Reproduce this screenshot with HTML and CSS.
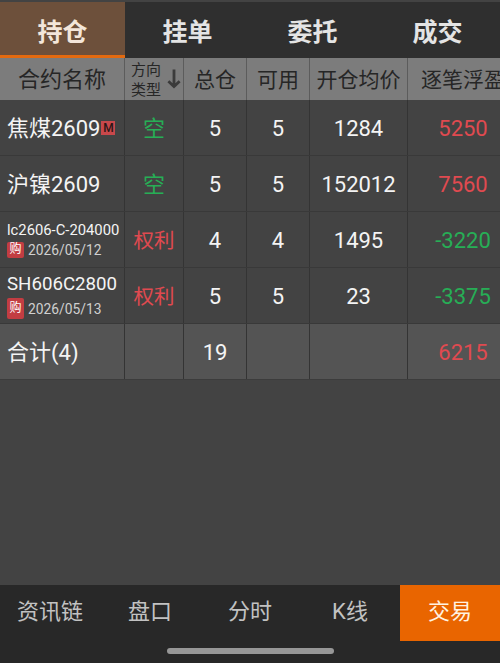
FILE: index.html
```
<!DOCTYPE html>
<html lang="zh-CN">
<head>
    <meta charset="UTF-8">
    <meta name="viewport" content="width=device-width, initial-scale=1.0">
    <title>持仓</title>
    <link rel="stylesheet" href="styles.css">
</head>
<body>
    <div class="app">
        <nav class="tabs">
            <a class="tab active">持仓</a>
            <a class="tab">挂单</a>
            <a class="tab">委托</a>
            <a class="tab">成交</a>
        </nav>

        <main class="positions">
            <div class="row header">
                <div class="cell">合约名称</div>
                <div class="cell sort">
                    <span class="sort-label">方向<br>类型</span>
                    <svg class="arrow" width="14" height="20" viewBox="0 0 14 20">
                        <path d="M7 0.5V17M1.4 12.2L7 17.6L12.6 12.2" />
                    </svg>
                </div>
                <div class="cell">总仓</div>
                <div class="cell">可用</div>
                <div class="cell">开仓均价</div>
                <div class="cell">逐笔浮盈</div>
            </div>

            <div class="row">
                <div class="cell name">焦煤2609<span class="main-badge">M</span></div>
                <div class="cell green">空</div>
                <div class="cell">5</div>
                <div class="cell">5</div>
                <div class="cell">1284</div>
                <div class="cell red">5250</div>
            </div>
            <div class="row">
                <div class="cell name">沪镍2609</div>
                <div class="cell green">空</div>
                <div class="cell">5</div>
                <div class="cell">5</div>
                <div class="cell">152012</div>
                <div class="cell red">7560</div>
            </div>
            <div class="row">
                <div class="cell name option">
                    <div class="code code-small">lc2606-C-204000</div>
                    <div class="expiry"><span class="buy-badge">购</span>2026/05/12</div>
                </div>
                <div class="cell red side">权利</div>
                <div class="cell">4</div>
                <div class="cell">4</div>
                <div class="cell">1495</div>
                <div class="cell green">-3220</div>
            </div>
            <div class="row">
                <div class="cell name option spaced">
                    <div class="code">SH606C2800</div>
                    <div class="expiry"><span class="buy-badge tall">购</span>2026/05/13</div>
                </div>
                <div class="cell red side">权利</div>
                <div class="cell">5</div>
                <div class="cell">5</div>
                <div class="cell">23</div>
                <div class="cell green">-3375</div>
            </div>
            <div class="row total">
                <div class="cell name">合计(4)</div>
                <div class="cell"></div>
                <div class="cell">19</div>
                <div class="cell"></div>
                <div class="cell"></div>
                <div class="cell red">6215</div>
            </div>
        </main>

        <footer class="bottom">
            <nav class="bottom-nav">
                <a class="nav-item">资讯链</a>
                <a class="nav-item">盘口</a>
                <a class="nav-item">分时</a>
                <a class="nav-item">K线</a>
                <a class="nav-item active">交易</a>
            </nav>
            <div class="home-bar"></div>
        </footer>
    </div>
</body>
</html>
```

FILE: styles.css
```
:root {
    --bg: #434343;
    --bar: #2f2f2f;
    --bottom: #282828;
    --line: #343434;
    --orange: #e96500;
    --red: #e04a50;
    --green: #27ae56;
    --text: #f4f4f4;
}

* {
    box-sizing: border-box;
}

body {
    margin: 0;
    background: var(--bg);
    color: var(--text);
    font-family: Roboto, "Noto Sans CJK SC", sans-serif;
    font-size: 22px;
    overflow: hidden;
}

.app {
    display: flex;
    flex-direction: column;
    width: 500px;
    height: 663px;
    padding-top: 2px;
    overflow: hidden;
}

/* top tabs */
.tabs {
    display: flex;
    height: 56px;
    background: var(--bar);
}

.tab {
    flex: 1;
    height: 56px;
    line-height: 61px;
    text-align: center;
    font-size: 25px;
    font-weight: 700;
    color: #e4e4e4;
}

.tab.active {
    background: #6d503b;
    border-bottom: 3px solid #e36a10;
    color: #f3e6da;
}

/* positions table */
.positions {
    flex: 1;
}

.row {
    display: grid;
    grid-template-columns: 125px 59px 63px 63px 98px 111px;
    width: 519px;
    height: 56px;
    border-bottom: 1px solid #393939;
}

.cell {
    display: flex;
    align-items: center;
    justify-content: center;
    border-right: 1px solid var(--line);
    padding-top: 2px;
    line-height: 28px;
    white-space: nowrap;
}

.cell:last-child {
    border-right: none;
    padding-right: 1px;
}

.name {
    justify-content: flex-start;
    padding-left: 7px;
}

.header {
    height: 42px;
    background: #7c7c7c;
    color: #262626;
    font-size: 21px;
    border-bottom: none;
}

.header .cell {
    border-right-color: #5c5c5c;
}

.header .cell:first-child {
    font-size: 22px;
}

.header .sort {
    gap: 6px;
    padding-left: 4px;
}

.sort-label {
    font-size: 15px;
    line-height: 20px;
}

.arrow {
    margin-top: -2px;
    fill: none;
    stroke: #3b3b3b;
    stroke-width: 2.8;
}

.total {
    background: #545454;
    border-bottom-color: #3c3c3c;
}

.red {
    color: var(--red);
}

.green {
    color: var(--green);
}

.side {
    font-size: 20.5px;
}

.main-badge {
    width: 14px;
    height: 14px;
    margin-left: 1px;
    margin-bottom: 2px;
    background: #c8484b;
    color: #2a1616;
    font-size: 12px;
    font-weight: 500;
    line-height: 14px;
    text-align: center;
}

/* option contracts: code above, expiry below */
.option {
    flex-direction: column;
    align-items: flex-start;
    justify-content: center;
    padding-top: 0;
}

.spaced {
    gap: 4px;
    padding-top: 2px;
}

.code {
    font-size: 18.7px;
    line-height: 20px;
}

.code-small {
    font-size: 14.8px;
    line-height: 20px;
}

.expiry {
    display: flex;
    align-items: center;
    gap: 4px;
    font-size: 13.8px;
    line-height: 20px;
    color: #d0d0d0;
}

.buy-badge {
    width: 17px;
    height: 16px;
    margin-top: 1px;
    border-radius: 2px;
    background: #c23d42;
    color: #fff;
    font-size: 12px;
    line-height: 15px;
    text-align: center;
}

.buy-badge.tall {
    height: 21px;
    margin-top: 0;
    line-height: 20px;
}

/* bottom navigation */
.bottom {
    height: 78px;
    background: var(--bottom);
}

.bottom-nav {
    display: flex;
    height: 56px;
}

.nav-item {
    flex: 1;
    line-height: 54px;
    text-align: center;
    color: #c2c2c2;
}

.nav-item.active {
    background: var(--orange);
    color: #fff3e2;
}

.home-bar {
    width: 167px;
    height: 6px;
    margin: 7px auto 0;
    border-radius: 3px;
    background: #979797;
}
```
